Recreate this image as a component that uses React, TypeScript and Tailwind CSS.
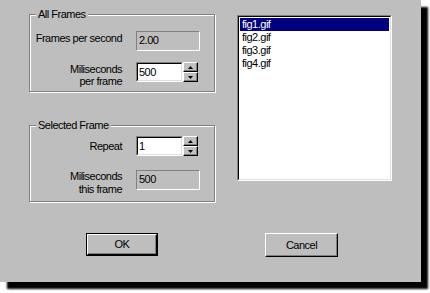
import React from "react";

const font = { fontFamily: '"Liberation Sans", Arial, sans-serif' };

function Sunken({ className = "", children }: { className?: string; children?: React.ReactNode }) {
  return (
    <div className={`border border-t-[#808080] border-l-[#808080] border-b-white border-r-white ${className}`}>
      <div className="h-full w-full border border-t-black border-l-black border-b-[#dfdfdf] border-r-[#dfdfdf] bg-white">
        {children}
      </div>
    </div>
  );
}

function Static({ value, className = "" }: { value: string; className?: string }) {
  return (
    <div
      className={`h-[20px] w-[64px] border border-t-[#808080] border-l-[#808080] border-b-white border-r-white pl-[2px] leading-[17px] ${className}`}
    >
      {value}
    </div>
  );
}

function SpinBtn({ up }: { up: boolean }) {
  return (
    <div className="flex h-[10px] w-[15px] items-center justify-center border border-t-white border-l-white border-b-black border-r-black bg-[#c0c0c0] shadow-[inset_-1px_-1px_0_#808080]">
      <svg width="5" height="3" viewBox="0 0 5 3">
        {up ? <polygon points="2.5,0 5,3 0,3" fill="#000" /> : <polygon points="0,0 5,0 2.5,3" fill="#000" />}
      </svg>
    </div>
  );
}

function Spin({ value }: { value: string }) {
  return (
    <div className="flex h-[20px]">
      <Sunken className="h-[20px] w-[47px]">
        <div className="pl-[1px] leading-[16px]">{value}</div>
      </Sunken>
      <div className="flex flex-col">
        <SpinBtn up />
        <SpinBtn up={false} />
      </div>
    </div>
  );
}

function Group({ title, className = "", children }: { title: string; className?: string; children?: React.ReactNode }) {
  return (
    <div
      className={`relative w-[186px] border border-[#808080] shadow-[inset_1px_1px_0_#fff,1px_1px_0_#fff] ${className}`}
    >
      <span className="absolute -top-[7px] left-[6px] bg-[#bebebe] px-[2px] leading-[13px]">{title}</span>
      {children}
    </div>
  );
}

export default function App() {
  return (
    <div className="h-[293px] w-[430px] bg-white text-[11px] tracking-[-0.5px] text-black" style={font}>
      <div className="flex h-[282px] w-[421px] flex-col bg-[#bebebe] pt-[14px] shadow-[7px_7px_2px_#000]">
        <div className="flex items-start pl-[29px]">
          <div className="flex flex-col">
            <Group title="All Frames" className="h-[78px]">
              <div className="flex items-start pt-[16px]">
                <div className="w-[92px] pt-[1px] text-right leading-[13px]">Frames per second</div>
                <Static value="2.00" className="ml-[14px]" />
              </div>
              <div className="mt-[11px] flex items-start">
                <div className="w-[92px] pt-[1px] text-right leading-[12px]">
                  Miliseconds
                  <br />
                  per frame
                </div>
                <div className="ml-[14px]">
                  <Spin value="500" />
                </div>
              </div>
            </Group>
            <Group title="Selected Frame" className="mt-[33px] h-[77px]">
              <div className="flex items-center pt-[10px]">
                <div className="w-[92px] text-right leading-[13px]">Repeat</div>
                <div className="ml-[14px]">
                  <Spin value="1" />
                </div>
              </div>
              <div className="mt-[14px] flex items-start">
                <div className="w-[92px] text-right leading-[13px]">
                  Miliseconds
                  <br />
                  this frame
                </div>
                <Static value="500" className="ml-[14px]" />
              </div>
            </Group>
          </div>
          <Sunken className="ml-[22px] mt-[1px] h-[166px] w-[155px]">
            <div className="flex flex-col pt-[1px]">
              <div className="mx-[1px] h-[13px] bg-[#000080] pl-[2px] leading-[13px] text-white">fig1.gif</div>
              <div className="h-[13px] pl-[3px] leading-[13px]">fig2.gif</div>
              <div className="h-[13px] pl-[3px] leading-[13px]">fig3.gif</div>
              <div className="h-[13px] pl-[3px] leading-[13px]">fig4.gif</div>
            </div>
          </Sunken>
        </div>
        <div className="flex pl-[86px] pt-[31px]">
          <div className="h-[23px] w-[72px] border border-black">
            <div className="flex h-full w-full items-center justify-center border border-t-white border-l-white border-b-black border-r-black shadow-[inset_-1px_-1px_0_#808080]">
              OK
            </div>
          </div>
          <div className="ml-[107px] flex h-[24px] w-[73px] items-center justify-center border border-t-white border-l-white border-b-black border-r-black shadow-[inset_-1px_-1px_0_#808080]">
            Cancel
          </div>
        </div>
      </div>
    </div>
  );
}
